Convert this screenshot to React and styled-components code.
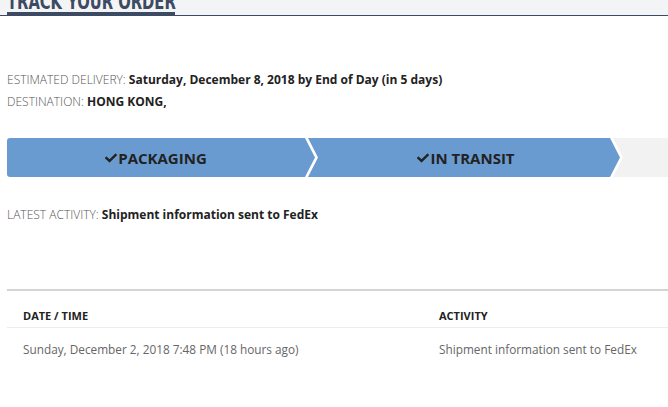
import React from "react";
import styled, { createGlobalStyle } from "styled-components";
import { FaCheck } from "react-icons/fa";

const GlobalStyle = createGlobalStyle`
  html, body {
    margin: 0;
    padding: 0;
    background: #fff;
    font-family: "Open Sans", "Liberation Sans", sans-serif;
    overflow: hidden;
  }
`;

const Page = styled.div`
  width: 668px;
  overflow: hidden;
`;

const Header = styled.div`
  height: 15px;
  background: #f3f4f6;
  border-bottom: 1px solid #3d4a63;
  padding-left: 7px;
  display: flex;
  align-items: flex-end;
  overflow: hidden;
`;

const Tab = styled.div`
  width: 168px;
  height: 4px;
  background: #3d4a63;
  margin-bottom: -1px;
  position: relative;
`;

const TabTitle = styled.span`
  position: absolute;
  left: 0;
  bottom: 3px;
  font-family: "DejaVu Sans Condensed", "Liberation Sans Narrow", sans-serif;
  font-weight: 700;
  font-size: 21px;
  line-height: 1;
  color: #3d4a63;
  white-space: nowrap;
  transform: scaleX(0.78);
  transform-origin: left bottom;
`;

const Content = styled.div`
  padding: 53px 0 0 7px;
`;

const InfoLine = styled.div`
  font-size: 12px;
  line-height: 22px;
  color: #555;
  white-space: nowrap;
`;

const Label = styled.span`
  font-weight: 300;
  text-transform: uppercase;
`;

const Value = styled.span`
  font-weight: 700;
  color: #222;
`;

const Steps = styled.div`
  display: flex;
  height: 39px;
  margin-top: 25px;
  margin-bottom: 27px;
  width: 720px;
`;

const Step = styled.div`
  flex: ${(p) => (p.$grow ? "1" : "none")};
  width: ${(p) => (p.$width ? `${p.$width}px` : "auto")};
  margin-left: ${(p) => (p.$first ? "0" : "-7px")};
  background: ${(p) => (p.$done ? "#6a9bd0" : "#f2f2f2")};
  border-radius: ${(p) => (p.$first ? "3px 0 0 3px" : "0")};
  padding-left: ${(p) => (p.$first ? "0" : "14px")};
  padding-right: 10px;
  display: flex;
  align-items: center;
  justify-content: center;
  gap: 1px;
  font-size: 15px;
  font-weight: 700;
  color: #222;
  box-sizing: border-box;
  clip-path: ${(p) =>
    p.$first
      ? "polygon(0 0, calc(100% - 10px) 0, 100% 50%, calc(100% - 10px) 100%, 0 100%)"
      : p.$grow
      ? "polygon(0 0, 100% 0, 100% 100%, 0 100%, 10px 50%)"
      : "polygon(0 0, calc(100% - 10px) 0, 100% 50%, calc(100% - 10px) 100%, 0 100%, 10px 50%)"};
  svg {
    width: 12px;
    height: 12px;
  }
`;

const Divider = styled.div`
  height: 2px;
  background: #d4d4d4;
  margin-top: 63px;
  width: 700px;
`;

const Table = styled.div`
  display: grid;
  grid-template-columns: 416px 1fr;
  width: 700px;
  margin-top: 15px;
`;

const HeadCell = styled.div`
  padding: 0 16px;
  font-size: 11px;
  font-weight: 700;
  color: #222;
  line-height: 20px;
  padding-bottom: 1px;
  border-bottom: 1px solid #ececec;
  text-transform: uppercase;
`;

const Cell = styled.div`
  padding: 10px 16px;
  font-size: 11.8px;
  color: #666;
  line-height: 22px;
  white-space: nowrap;
`;

export default function App() {
  return (
    <Page>
      <GlobalStyle />
      <Header>
        <Tab>
          <TabTitle>TRACK YOUR ORDER</TabTitle>
        </Tab>
      </Header>
      <Content>
        <InfoLine>
          <Label>Estimated Delivery: </Label>
          <Value>Saturday, December 8, 2018 by End of Day (in 5 days)</Value>
        </InfoLine>
        <InfoLine>
          <Label>Destination: </Label>
          <Value>HONG KONG,</Value>
        </InfoLine>
        <Steps>
          <Step $first $done $width={308}>
            <FaCheck />
            PACKAGING
          </Step>
          <Step $done $width={312}>
            <FaCheck />
            IN TRANSIT
          </Step>
          <Step $grow />
        </Steps>
        <InfoLine>
          <Label>Latest Activity: </Label>
          <Value>Shipment information sent to FedEx</Value>
        </InfoLine>
        <Divider />
        <Table>
          <HeadCell>Date / Time</HeadCell>
          <HeadCell>Activity</HeadCell>
          <Cell>Sunday, December 2, 2018 7:48 PM (18 hours ago)</Cell>
          <Cell>Shipment information sent to FedEx</Cell>
        </Table>
      </Content>
    </Page>
  );
}
